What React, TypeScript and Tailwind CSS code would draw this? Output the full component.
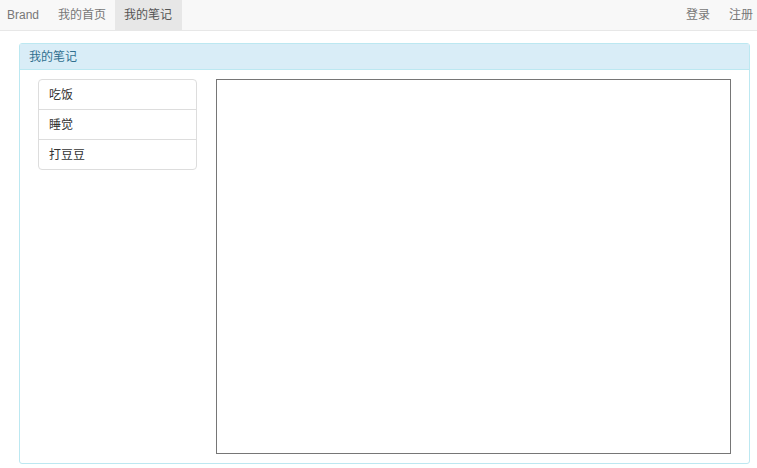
const font = { fontFamily: '"Liberation Sans", "Noto Sans CJK SC", sans-serif' };

const notes = ["吃饭", "睡觉", "打豆豆"];

export default function App() {
  return (
    <div className="min-h-[468px] bg-white text-[12px] text-[#333]" style={font}>
      <nav className="flex h-[31px] items-stretch justify-between border-b border-[#e7e7e7] bg-[#f8f8f8] text-[#777]">
        <div className="flex items-stretch">
          <a className="flex items-center pb-[1px] pl-[7px] pr-[9px]">Brand</a>
          <a className="flex items-center pb-[1px] pl-[10px] pr-[9px]">我的首页</a>
          <a className="flex items-center bg-[#e7e7e7] pb-[1px] pl-[9px] pr-[10px] text-[#555]">我的笔记</a>
        </div>
        <div className="flex items-stretch">
          <a className="flex items-center pb-[1px] px-[9px]">登录</a>
          <a className="flex items-center pb-[1px] pl-[10px] pr-[4px]">注册</a>
        </div>
      </nav>

      <div className="ml-[19px] mt-[12px] w-[731px] rounded-[3px] border border-[#bce8f1] bg-white">
        <div className="flex h-[26px] items-center border-b border-[#bce8f1] bg-[#d9edf7] px-[9px] text-[#31708f]">
          我的笔记
        </div>
        <div className="flex gap-[19px] pb-[9px] pl-[18px] pr-[18px] pt-[9px]">
          <ul className="h-[91px] w-[159px] shrink-0 rounded-[4px] border border-[#ddd]">
            {notes.map((n, i) => (
              <li
                key={n}
                className={`flex items-center px-[10px] ${i > 0 ? "h-[30px] border-t border-[#ddd]" : "h-[29px]"}`}
              >
                {n}
              </li>
            ))}
          </ul>
          <textarea className="h-[375px] flex-1 resize-none border border-[#767676] outline-none" />
        </div>
      </div>
    </div>
  );
}
